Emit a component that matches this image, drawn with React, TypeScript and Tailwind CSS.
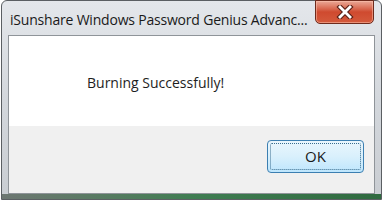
import React from "react";

export default function App() {
  return (
    <div className="w-[382px] h-[200px] bg-white overflow-hidden" style={{ fontFamily: '"Open Sans", "Noto Sans", sans-serif' }}>
      <div className="relative ml-[1px] w-[381px] h-[200px] rounded-t-[6px] border border-[#5b5f63] bg-gradient-to-b from-[#e4e7eb] via-[#d3d7dc] to-[#c9cdd2] flex flex-col">
        {/* title row */}
        <div className="h-[34px] shrink-0 flex items-center pl-[8px] pt-[2px]">
          <span className="text-[14px] text-[#1a1a1a] whitespace-nowrap tracking-[-0.2px]">iSunshare Windows Password Genius Advanc...</span>
        </div>
        {/* close button */}
        <div className="absolute top-[-1px] right-[7px] w-[59px] h-[24px] rounded-b-[5px] border border-[#6e2a1c] bg-gradient-to-b from-[#e9a897] via-[#cf4a2f] to-[#d45a3c] flex items-center justify-center shadow-[inset_0_0_0_1px_rgba(255,200,180,0.5)]">
          <svg width="20" height="14" viewBox="0 0 20 14">
            <path d="M5 2 L15 12 M15 2 L5 12" stroke="#5a2016" strokeWidth="5" strokeLinecap="square" />
            <path d="M5 2 L15 12 M15 2 L5 12" stroke="#ffffff" strokeWidth="2.8" strokeLinecap="square" />
          </svg>
        </div>
        {/* content panel */}
        <div className="mx-[6px] flex-1 mb-[5px] border border-[#8f9499] flex flex-col bg-white">
          <div className="h-[90px] bg-white flex items-start pt-[36px] pl-[78px]">
            <span className="text-[14px] text-[#1e1e1e]">Burning Successfully!</span>
          </div>
          <div className="flex-1 bg-[#f0f0f0] flex justify-end items-start pt-[14px] pr-[10px]">
            <div className="w-[97px] h-[33px] rounded-[4px] border border-[#3c7fb1] bg-gradient-to-b from-[#eaf6fd] via-[#d9f0fc] to-[#bee6fd] p-[2px]">
              <div className="w-full h-full rounded-[2px] border border-dotted border-[#3a6e8f] flex items-center justify-center">
                <span className="text-[15px] text-[#1a1a1a]">OK</span>
              </div>
            </div>
          </div>
        </div>
        {/* bottom green tint */}
        <div className="absolute left-0 right-0 bottom-0 h-[5px] bg-gradient-to-r from-[#6d7772] via-[#3f7d52] to-[#2f6a3f]" />
      </div>
    </div>
  );
}
